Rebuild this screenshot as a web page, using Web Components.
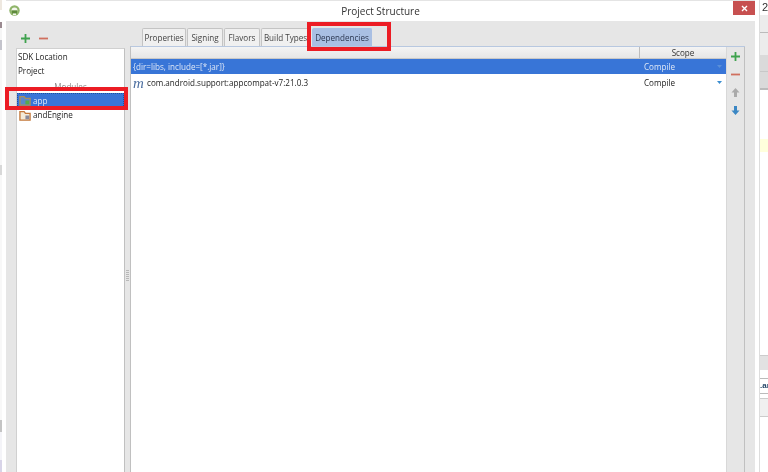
<!DOCTYPE html>
<html>
<head>
<meta charset="utf-8">
<title>Project Structure</title>
<style>
  html, body { margin: 0; height: 100%; overflow: hidden; background: #fff; }
  body { font: 8.1px "Open Sans", "Noto Sans", sans-serif; color: #222; }
</style>
</head>
<body>
<project-structure></project-structure>
<script>
/* small helper so each element only says what it renders */
const define = (name, css, html) => customElements.define(name, class extends HTMLElement {
    constructor() {
	super();
	const shadow = this.attachShadow({ mode: "open" });
	shadow.innerHTML = `<style>${css}</style>${typeof html == 'function' ? html(this) : html}`;
    }
});

const FOLDER = (frame, fill, inner) => `
<svg width="12" height="11" viewBox="0 0 14 13" style="flex:none">
  <path d="M1 2h5l1.500 2H13v8H1z" fill="${fill}" stroke="${frame}" stroke-width="1.600"/>
  <rect x="7.500" y="6.500" width="4.500" height="4.500" fill="${inner}"/>
</svg>`;

define("side-strip", `
  :host { display: flex; flex-direction: column; flex: none; width: var(--w); box-sizing: border-box; background: #fff; overflow: hidden; }
  :host([right]) { border-left: 1px solid #ddd; }
  div { flex: none; box-sizing: border-box; }
  span { display: block; font: 11px "Liberation Sans", sans-serif; color: #333; line-height: 15px; padding-left: 2px; }
`, (el) => el.hasAttribute('right') ? `
  <div style="height:15px"><span>2</span></div>
  <div style="height:18px;background:#ececec;border-bottom:1px solid #bbb"></div>
  <div style="height:22px;background:#ececec"></div>
  <div style="height:17px;background:#dadada;border-bottom:1px solid #c8c8c8"></div>
  <div style="height:18px;background:#dadada;border-bottom:2px solid #bbb"></div>
  <div style="height:49px"></div>
  <div style="height:13px;background:#ffffdc"></div>
  <div style="height:203px"></div>
  <div style="height:15px;background:#e2e2e2;border-top:1px solid #ccc"></div>
  <div style="height:9px;border-bottom:1px solid #bbb"></div>
  <div style="height:14px;overflow:hidden;font:bold 8px/14px 'Liberation Sans',sans-serif;color:#246;white-space:nowrap">.an</div>
  <div style="height:6px;border-top:1px solid #bbb;border-bottom:1px solid #ccc"></div>
  <div style="height:18px;background:#f0f0f0;border-bottom:1px solid #ccc"></div>
` : `
  <div style="height:10px;background:#eee8e0"></div>
  <div style="height:12px;background:#fff"></div>
  <div style="height:6px;background:#9a8a90"></div>
  <div style="height:12px;background:#f6f6f6"></div>
  <div style="height:10px;background:#c4c4cc"></div>
  <div style="height:115px;background:#f8f8f8"></div>
  <div style="height:10px;background:#d8d8d8"></div>
  <div style="height:245px;background:#f8f8f8"></div>
  <div style="height:12px;background:#c4c4c4"></div>
  <div style="height:28px;background:#f4f4f8"></div>
  <div style="height:12px;background:#d8d4e8"></div>
`);

define("title-bar", `
  :host { display: flex; flex: none; height: 21px; box-sizing: border-box; background: #fff; border-top: 1px solid #e4e4e4; position: relative; align-items: center; justify-content: center; }
  .title { font: 10px "Open Sans", sans-serif; color: #333; }
  .logo { position: absolute; left: 3px; top: 4px; }
  .close { position: absolute; right: 0; top: 0; width: 22px; height: 14px; background: #c75050;
           display: flex; align-items: center; justify-content: center; }
`, `
  <svg class="logo" width="11" height="11" viewBox="0 0 11 11">
    <circle cx="5.500" cy="5.500" r="5.200" fill="#8fb56a"/>
    <path d="M2.500 5.500a3 3 0 0 1 6 0z" fill="#f4f6ee"/>
    <rect x="3" y="5.500" width="5" height="3" fill="#5e8a3c"/>
    <rect x="4" y="8.500" width="3" height="1.500" fill="#f4f6ee"/>
  </svg>
  <span class="title">Project Structure</span>
  <div class="close"><svg width="7" height="7" viewBox="0 0 7 7"><path d="M1 1l5 5M6 1l-5 5" stroke="#fff" stroke-width="1.400"/></svg></div>
`);

define("module-list", `
  :host { display: flex; flex-direction: column; flex: none; width: 109px; }
  .tools { display: flex; height: 27px; flex: none; align-items: center; gap: 8px; padding-left: 4px; box-sizing: border-box; padding-top: 7px; }
  .box { flex: 1; background: #fff; border: 1px solid #d0d0d0; border-right-color: #c0c0c0; border-bottom: 0; padding-top: 1px; }
  .row { height: 14px; line-height: 14px; padding-left: 1px; white-space: nowrap; }
  .head { height: 15px; line-height: 17px; text-align: center; color: #8f8a8a; }
  .item { display: flex; align-items: center; gap: 2px; padding-left: 2px; }
  .sel { height: 15px; line-height: 15px; background: #3875d7; color: #dfe8f7; outline: 1px dotted #1d4f9e; outline-offset: -1px; }
`, `
  <div class="tools">
    <svg width="11" height="11" viewBox="0 0 11 11"><path d="M5.500 1v9M1 5.500h9" stroke="#3fa24e" stroke-width="1.800"/></svg>
    <svg width="9" height="11" viewBox="0 0 9 11"><path d="M0 5.500h9" stroke="#d0705f" stroke-width="1.800"/></svg>
  </div>
  <div class="box">
    <div class="row">SDK Location</div>
    <div class="row">Project</div>
    <div class="head">Modules</div>
    <div class="row item sel">${FOLDER('#a98f5c', '#5c88c8', '#5aa84a')}<span>app</span></div>
    <div class="row item">${FOLDER('#c4793c', '#f4ead8', '#8a8a9a')}<span>andEngine</span></div>
  </div>
`);

define("split-grip", `
  :host { display: flex; flex: none; width: 5px; align-items: center; justify-content: center; }
  i { width: 3px; height: 11px; margin-top: 57px; background: repeating-linear-gradient(#b8b8b8 0 1px, transparent 1px 2px); }
`, `<i></i>`);

define("tab-strip", `
  :host { display: flex; flex: none; height: 18px; align-items: flex-end; padding-left: 12px; gap: 1px; }
`, `<slot></slot>`);

define("tab-item", `
  :host { display: block; height: 18px; line-height: 17px; text-align: center; box-sizing: border-box; background: #f0f0f0;
          border: 1px solid #c4c4c4; border-bottom: 0; border-radius: 2px 2px 0 0; white-space: nowrap; color: #444; }
  :host([active]) { background: #a9bfe3; border-color: #a9bfe3; color: #2b3650; margin-left: 1px; }
`, `<slot></slot>`);

define("dep-row", `
  :host { display: flex; height: 15px; line-height: 15px; white-space: nowrap; align-items: center; margin-bottom: 1px; }
  :host([selected]) { background: #3875d7; color: #dfe8f7; }
  .name { flex: 1; padding-left: 2px; display: flex; align-items: center; gap: 2px; }
  .scope { flex: none; width: 87px; padding-left: 5px; box-sizing: border-box; position: relative; }
  .scope svg { position: absolute; right: 4px; top: 6px; }
  ::slotted(em) { display: block; width: 12px; font: italic 15px/12px "Liberation Serif", serif; color: #4d6fa0; }
`, (el) => `
  <div class="name"><slot></slot></div>
  <div class="scope">Compile<svg width="5" height="3" viewBox="0 0 5 3"><path d="M0 0h5L2.500 3z" fill="${el.hasAttribute('selected') ? '#5a8fd8' : '#3b8ed0'}"/></svg></div>
`);

define("dep-table", `
  :host { display: flex; flex-direction: column; flex: 1; min-width: 0; background: #fff; }
  .head { display: flex; flex: none; height: 12px; box-sizing: border-box; line-height: 11px; background: linear-gradient(#f4f4f4, #e6e6e6);
          border-bottom: 1px solid #c8c8c8; }
  .head div:first-child { flex: 1; }
  .head div:last-child { width: 87px; box-sizing: border-box; border-left: 1px solid #bdbdbd; text-align: center; color: #333; }
`, `
  <div class="head"><div></div><div>Scope</div></div>
  <slot></slot>
`);

define("dep-tools", `
  :host { display: flex; flex-direction: column; flex: none; width: 19px; box-sizing: border-box; align-items: center; gap: 7px; padding-top: 4px; border-left: 1px solid #d8d8d8; border-right: 1px solid #c0c0c0; background: #e6e6e6; }
  svg { display: block; }
`, `
  <svg width="11" height="11" viewBox="0 0 11 11"><path d="M5.500 1v9M1 5.500h9" stroke="#3fa24e" stroke-width="1.800"/></svg>
  <svg width="9" height="11" viewBox="0 0 9 11"><path d="M0 5.500h9" stroke="#d0705f" stroke-width="1.800"/></svg>
  <svg width="9" height="11" viewBox="0 0 9 11"><path d="M4.500 1L8.500 5.500H6V10H3V5.500H.5z" fill="#aaa"/></svg>
  <svg width="9" height="11" viewBox="0 0 9 11"><path d="M4.500 10L8.500 5.500H6V1H3V5.500H.5z" fill="#3b87c4"/></svg>
`);

define("red-box", `
  :host { position: absolute; box-sizing: border-box; border: 4px solid #ec1c24; display: block; }
`, ``);

define("project-structure", `
  :host { display: flex; width: 768px; height: 472px; position: relative; overflow: hidden; filter: blur(.45px); }
  .win { display: flex; flex-direction: column; flex: none; width: 757px; box-sizing: border-box; padding: 0 4px; background: #fff; }
  .body { flex: 1; display: flex; background: #e6e6e6; padding: 0 10px; min-height: 0; }
  .main { flex: 1; display: flex; flex-direction: column; padding-top: 7px; min-width: 0; }
  .panel { flex: 1; display: flex; border-top: 1px solid #b8c8e0; border-left: 1px solid #c0c0c0; min-height: 0; }
`, `
  <side-strip style="--w:2px"></side-strip>
  <div class="win">
    <title-bar></title-bar>
    <div class="body">
      <module-list></module-list>
      <split-grip></split-grip>
      <div class="main">
	<tab-strip>
	  <tab-item style="width:44px">Properties</tab-item>
	  <tab-item style="width:36px">Signing</tab-item>
	  <tab-item style="width:36px">Flavors</tab-item>
	  <tab-item style="width:49px">Build Types</tab-item>
	  <tab-item style="width:60px" active>Dependencies</tab-item>
	</tab-strip>
	<div class="panel">
	  <dep-table>
	    <dep-row selected>{dir=libs, include=[*.jar]}</dep-row>
	    <dep-row><em>m</em><span>com.android.support:appcompat-v7:21.0.3</span></dep-row>
	  </dep-table>
	  <dep-tools></dep-tools>
	</div>
      </div>
    </div>
  </div>
  <side-strip right style="--w:9px"></side-strip>
  <red-box style="left:307px;top:22px;width:84px;height:29px"></red-box>
  <red-box style="left:5px;top:87px;width:123px;height:23px"></red-box>
`);
</script>
</body>
</html>
